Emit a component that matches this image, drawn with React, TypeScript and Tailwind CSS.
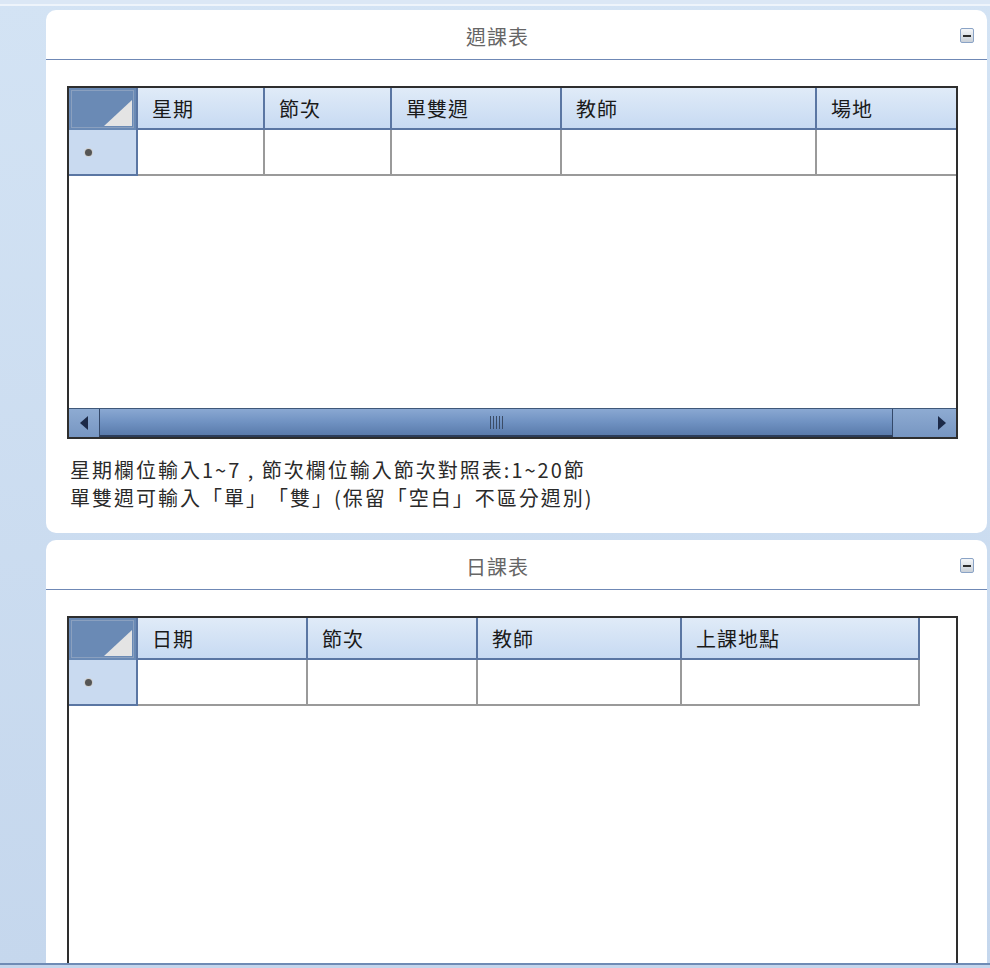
import React from "react";

type Col = { label: string; width?: number };

const FONT = "font-['Noto_Sans_CJK_TC','Noto_Sans',sans-serif]";

function MinimizeButton() {
  return (
    <div className="flex h-[15px] w-[14px] items-center justify-center rounded-[2px] border border-[#8aa3c6] bg-gradient-to-b from-[#f4f6f8] to-[#c9d0d8]">
      <div className="h-[2px] w-[8px] bg-[#2d2d2d]" />
    </div>
  );
}

function CornerCell() {
  return (
    <div className="relative h-full w-[69px] shrink-0 border-r-2 border-[#5a76a3] bg-[#6a8ab5] p-[2px]">
      <div className="relative h-full w-full border border-[#8aa0bf]">
        <svg className="absolute bottom-[1px] right-[1px]" width="28" height="26" viewBox="0 0 28 26">
          <polygon points="28,0 28,26 0,26" fill="#e4e4e4" />
        </svg>
      </div>
    </div>
  );
}

function HScrollbar() {
  return (
    <div className="flex h-[29px] shrink-0 border-t border-[#3f5879] bg-[#5b7aa8]">
      <div className="flex w-[30px] items-center justify-center bg-gradient-to-b from-[#8eabd2] to-[#7796c2]">
        <svg width="8" height="14" viewBox="0 0 8 14">
          <polygon points="8,0 8,14 0,7" fill="#1c2a48" />
        </svg>
      </div>
      <div className="flex flex-1 items-center justify-center border-x border-[#34496a] border-b-2 border-b-[#2c3d5a] bg-gradient-to-b from-[#8aa8d2] via-[#7092c2] to-[#5a7bab]">
        <div className="flex gap-[2px]">
          {[0, 1, 2, 3, 4].map((i) => (
            <div key={i} className="h-[13px] w-[1px] bg-[#3b4c66]" />
          ))}
        </div>
      </div>
      <div className="flex w-[63px] items-center justify-end bg-gradient-to-b from-[#8eabd2] to-[#7796c2] pr-[10px]">
        <svg width="8" height="14" viewBox="0 0 8 14">
          <polygon points="0,0 0,14 8,7" fill="#1c2a48" />
        </svg>
      </div>
    </div>
  );
}

function Grid({
  cols,
  height,
  fill,
  scroll,
}: {
  cols: Col[];
  height: number;
  fill: boolean;
  scroll?: boolean;
}) {
  return (
    <div
      className="flex w-[891px] shrink-0 flex-col border-2 border-[#2e2e2e] bg-white"
      style={{ height }}
    >
      <div className="flex h-[42px] shrink-0">
        <CornerCell />
        <div className={`flex ${fill ? "flex-1" : ""} border-b-2 border-[#5a76a3]`}>
          {cols.map((c, i) => (
            <div
              key={c.label}
              className={`flex items-center bg-gradient-to-b from-[#e0ebf8] to-[#c7daf2] pl-[14px] pt-[2px] text-[20px] tracking-[1px] text-[#1a1a1a] ${
                i < cols.length - 1 || !fill ? "border-r-2 border-[#5a76a3]" : ""
              } ${!c.width ? "flex-1" : "shrink-0"}`}
              style={c.width ? { width: c.width } : undefined}
            >
              {c.label}
            </div>
          ))}
        </div>
      </div>
      <div className="flex h-[46px] shrink-0">
        <div className="flex w-[69px] shrink-0 items-center border-r-2 border-b-2 border-[#5a76a3] bg-[#c9daf0] pl-[16px]">
          <div className="h-[7px] w-[7px] rounded-full bg-[#555] ring-1 ring-[#cfcfcf]" />
        </div>
        <div className={`flex ${fill ? "flex-1" : ""} border-b-2 border-[#9a9a9a]`}>
          {cols.map((c, i) => (
            <div
              key={c.label}
              className={`${i < cols.length - 1 || !fill ? "border-r-2 border-[#9a9a9a]" : ""} ${
                !c.width ? "flex-1" : "shrink-0"
              }`}
              style={c.width ? { width: c.width } : undefined}
            />
          ))}
        </div>
      </div>
      <div className="flex-1" />
      {scroll && <HScrollbar />}
    </div>
  );
}

function Panel({
  title,
  children,
  className,
}: {
  title: string;
  children: React.ReactNode;
  className?: string;
}) {
  return (
    <section className={`flex flex-col overflow-hidden rounded-[10px] bg-white ${className ?? ""}`}>
      <header className="relative flex h-[50px] shrink-0 items-center justify-center border-b border-[#6f88b5] pr-[38px] pt-[4px]">
        <h2 className="text-[20px] tracking-[1px] text-[#666]">{title}</h2>
        <div className="absolute right-[13px] top-[18px]">
          <MinimizeButton />
        </div>
      </header>
      <div className="flex flex-col pl-[21px] pt-[26px]">{children}</div>
    </section>
  );
}

export default function App() {
  const weekly: Col[] = [
    { label: "星期", width: 127 },
    { label: "節次", width: 127 },
    { label: "單雙週", width: 170 },
    { label: "教師", width: 255 },
    { label: "場地" },
  ];
  const daily: Col[] = [
    { label: "日期", width: 170 },
    { label: "節次", width: 170 },
    { label: "教師", width: 204 },
    { label: "上課地點", width: 238 },
  ];

  return (
    <div
      className={`flex h-[968px] w-[990px] flex-col overflow-hidden bg-gradient-to-b from-[#d3e3f4] to-[#c5d7ed] ${FONT}`}
    >
      <div className="h-[4px] shrink-0 bg-[#dbe7f5]" />
      <div className="h-[2px] shrink-0 bg-[#eef4fb]" />
      <div className="flex min-h-0 flex-1 flex-col gap-[7px] pl-[46px] pr-[3px] pt-[4px]">
        <Panel title="週課表" className="h-[523px] shrink-0">
          <Grid cols={weekly} height={353} fill scroll />
          <div className="mt-[17px] pl-[3px] text-[20px] leading-[28px] tracking-[2px] text-[#2a2a2a] [text-spacing-trim:space-all]">
            <p>星期欄位輸入1~7 , 節次欄位輸入節次對照表:1~20節</p>
            <p>單雙週可輸入「單」「雙」(保留「空白」不區分週別)</p>
          </div>
        </Panel>
        <Panel title="日課表" className="min-h-0 flex-1 rounded-b-none">
          <Grid cols={daily} height={360} fill={false} />
        </Panel>
      </div>
      <div className="h-[2px] shrink-0 bg-[#6f8bb5]" />
      <div className="h-[3px] shrink-0 bg-[#c5d6ec]" />
    </div>
  );
}
